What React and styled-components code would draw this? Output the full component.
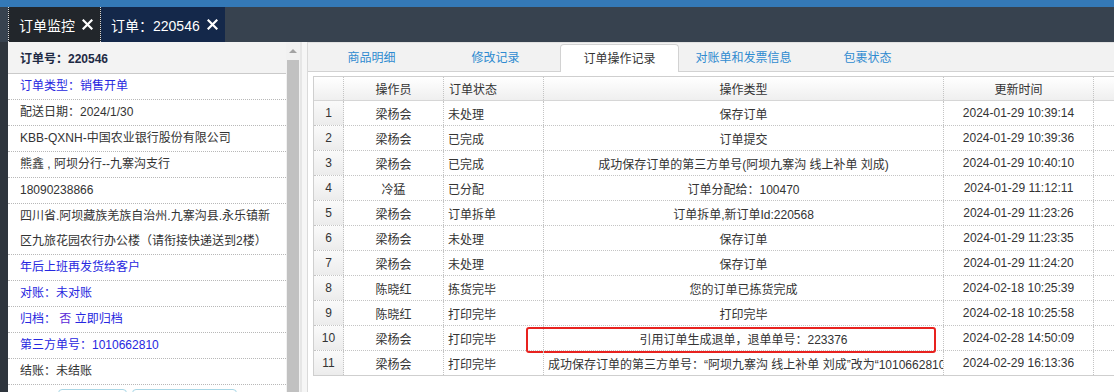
import React from 'react';
import styled, { createGlobalStyle } from 'styled-components';

const Global = createGlobalStyle`
  html, body { margin: 0; padding: 0; }
  body {
    font-family: "Liberation Sans", "Noto Sans CJK SC", sans-serif;
    font-size: 12px;
    color: #333;
    background: #364250;
  }
  * { box-sizing: border-box; }
`;

const Page = styled.div`
  width: 1114px;
  height: 392px;
  overflow: hidden;
  display: flex;
  flex-direction: column;
  background: #364250;
`;

const TopStrip = styled.div`
  flex: none;
  height: 7px;
  background: #3479b7;
`;

const TabBar = styled.div`
  flex: none;
  height: 35px;
  display: flex;
  padding-left: 8px;
  background: #37424f;
`;

const PageTab = styled.div`
  display: flex;
  align-items: center;
  gap: 7px;
  padding: 0 7px 0 10px;
  color: #fff;
  font-size: 14px;
  background: ${p => (p.$active ? '#14284a' : '#22262b')};
  border-left: ${p => (p.$active ? 'none' : '1px dotted #d8d8d8')};
  border-right: ${p => (p.$active ? 'none' : '1px dotted #d8d8d8')};
`;

const CloseIcon = () => (
  <svg width="11" height="11" viewBox="0 0 11 11">
    <path d="M1.5 1.5 L9.5 9.5 M9.5 1.5 L1.5 9.5" stroke="#fff" strokeWidth="2.2" strokeLinecap="square" />
  </svg>
);

const Body = styled.div`
  flex: 1;
  min-height: 0;
  display: flex;
  padding-left: 8px;
  background: #2e353d;
`;

const LeftPanel = styled.div`
  flex: none;
  width: 278px;
  background: #fff;
  display: flex;
  flex-direction: column;
`;

const InfoHeader = styled.div`
  flex: none;
  height: 32px;
  display: flex;
  align-items: center;
  padding-left: 12px;
  background: #f3f3f3;
  border-bottom: 1px solid #cacaca;
  font-weight: bold;
  color: #1e2a44;
`;

const InfoRow = styled.div`
  flex: none;
  padding: 0 6px 0 12px;
  line-height: 25px;
  border-bottom: 1px dotted #b8b8b8;
  color: ${p => (p.$blue ? '#2727e0' : '#333')};
  white-space: nowrap;
`;

const Accent = styled.span`
  color: #5a2ad8;
`;

const ButtonRow = styled.div`
  display: flex;
  justify-content: center;
  gap: 5px;
  padding-top: 4px;
`;

const SmallButton = styled.button`
  width: ${p => p.$w}px;
  height: 26px;
  background: #fff;
  border: 1px solid #a9d7e6;
  border-radius: 4px;
  font: inherit;
  color: #333;
`;

const Scrollbar = styled.div`
  flex: none;
  width: 14px;
  background: #f1f1f1;
  display: flex;
  flex-direction: column;
`;

const ScrollArrow = styled.div`
  flex: none;
  height: 18px;
  display: flex;
  align-items: center;
  justify-content: center;
  &::before {
    content: '';
    border-left: 4px solid transparent;
    border-right: 4px solid transparent;
    border-bottom: 4px solid #a3a3a3;
  }
`;

const ScrollThumb = styled.div`
  flex: 1;
  margin: 0 1px;
  background: #c1c1c1;
`;

const Splitter = styled.div`
  flex: none;
  width: 8px;
  background: #f6f6f6;
  border-left: 2px solid #e6e6e6;
  border-right: 1px solid #dadada;
`;

const RightPanel = styled.div`
  flex: 1;
  min-width: 0;
  background: #fff;
  display: flex;
  flex-direction: column;
`;

const SubTabBar = styled.div`
  flex: none;
  height: 30px;
  display: flex;
  align-items: flex-end;
  gap: 5px;
  padding-left: 4px;
  background: #f2f2f2;
  border-top: 1px solid #e2e2e2;
  border-bottom: 1px solid #d2d2d2;
`;

const SubTab = styled.div`
  flex: none;
  width: 119px;
  height: ${p => (p.$active ? '28px' : '27px')};
  margin-bottom: ${p => (p.$active ? '-1px' : '0')};
  display: flex;
  align-items: center;
  justify-content: center;
  padding-bottom: 2px;
  color: ${p => (p.$active ? '#333' : '#2f8bd0')};
  background: ${p => (p.$active ? '#fff' : 'transparent')};
  border: ${p => (p.$active ? '1px solid #d2d2d2' : 'none')};
  border-bottom: none;
  border-radius: 4px 4px 0 0;
`;

const TableWrap = styled.div`
  padding: 4px 0 0 5px;
`;

const Table = styled.div`
  width: 1000px;
  border: 1px solid #cfcfcf;
  display: flex;
  flex-direction: column;
`;

const cols = '30px 100px 100px 400px 150px 1fr';

const HeadRow = styled.div`
  display: grid;
  grid-template-columns: ${cols};
  height: 24px;
  background: linear-gradient(#ffffff, #efefef);
  border-bottom: 1px solid #d6d6d6;
`;

const HeadCell = styled.div`
  display: flex;
  align-items: center;
  justify-content: ${p => (p.$align === 'left' ? 'flex-start' : 'center')};
  padding-left: ${p => (p.$align === 'left' ? '5px' : '0')};
  border-right: ${p => (p.$fill ? 'none' : '1px dotted #c4c4c4')};
`;

const Row = styled.div`
  position: relative;
  display: grid;
  grid-template-columns: ${cols};
  height: 25px;
  border-bottom: 1px dotted #c4c4c4;
  &:last-child { border-bottom: none; height: 24px; }
`;

const Cell = styled.div`
  display: flex;
  align-items: center;
  justify-content: ${p => (p.$align === 'left' ? 'flex-start' : 'center')};
  padding-left: ${p => (p.$align === 'left' ? '4px' : '0')};
  overflow: hidden;
  white-space: nowrap;
  border-right: ${p => (p.$fill ? 'none' : '1px dotted #c4c4c4')};
  background: ${p => (p.$num ? 'linear-gradient(#fafafa, #ececec)' : 'transparent')};
`;

const Highlight = styled.div`
  position: absolute;
  left: 212px;
  top: 1px;
  width: 410px;
  height: 26px;
  border: 2px solid #e8221f;
  border-radius: 3px;
  pointer-events: none;
`;

const rows = [
  ['梁杨会', '未处理', '保存订单', '2024-01-29 10:39:14'],
  ['梁杨会', '已完成', '订单提交', '2024-01-29 10:39:36'],
  ['梁杨会', '已完成', '成功保存订单的第三方单号(阿坝九寨沟 线上补单 刘成)', '2024-01-29 10:40:10'],
  ['冷猛', '已分配', '订单分配给：100470', '2024-01-29 11:12:11'],
  ['梁杨会', '订单拆单', '订单拆单,新订单Id:220568', '2024-01-29 11:23:26'],
  ['梁杨会', '未处理', '保存订单', '2024-01-29 11:23:35'],
  ['梁杨会', '未处理', '保存订单', '2024-01-29 11:24:20'],
  ['陈晓红', '拣货完毕', '您的订单已拣货完成', '2024-02-18 10:25:39'],
  ['陈晓红', '打印完毕', '打印完毕', '2024-02-18 10:25:58'],
  ['梁杨会', '打印完毕', '引用订单生成退单，退单单号：223376', '2024-02-28 14:50:09', true],
  ['梁杨会', '打印完毕', '成功保存订单的第三方单号：“阿坝九寨沟 线上补单 刘成”改为“1010662810”', '2024-02-29 16:13:36', false, true],
];

const subTabs = ['商品明细', '修改记录', '订单操作记录', '对账单和发票信息', '包裹状态'];

export default function App() {
  return (
    <>
      <Global />
      <Page>
        <TopStrip />
        <TabBar>
          <PageTab>订单监控<CloseIcon /></PageTab>
          <PageTab $active>订单：220546<CloseIcon /></PageTab>
        </TabBar>
        <Body>
          <LeftPanel>
            <InfoHeader>订单号：220546</InfoHeader>
            <InfoRow $blue>订单类型：销售开单</InfoRow>
            <InfoRow>配送日期：2024/1/30</InfoRow>
            <InfoRow>KBB-QXNH-中国农业银行股份有限公司</InfoRow>
            <InfoRow>熊鑫 , 阿坝分行--九寨沟支行</InfoRow>
            <InfoRow>18090238866</InfoRow>
            <InfoRow>四川省.阿坝藏族羌族自治州.九寨沟县.永乐镇新<br />区九旅花园农行办公楼（请衔接快递送到2楼）</InfoRow>
            <InfoRow $blue>年后上班再发货给客户</InfoRow>
            <InfoRow $blue>对账：未对账</InfoRow>
            <InfoRow $blue>归档： <Accent>否</Accent> 立即归档</InfoRow>
            <InfoRow $blue>第三方单号：1010662810</InfoRow>
            <InfoRow>结账：未结账</InfoRow>
            <ButtonRow>
              <SmallButton $w={69}>确认结账</SmallButton>
              <SmallButton $w={105}>打印配送单</SmallButton>
            </ButtonRow>
          </LeftPanel>
          <Scrollbar>
            <ScrollArrow />
            <ScrollThumb />
          </Scrollbar>
          <Splitter />
          <RightPanel>
            <SubTabBar>
              {subTabs.map((t, i) => (
                <SubTab key={t} $active={i === 2}>{t}</SubTab>
              ))}
            </SubTabBar>
            <TableWrap>
              <Table>
                <HeadRow>
                  <HeadCell />
                  <HeadCell>操作员</HeadCell>
                  <HeadCell $align="left">订单状态</HeadCell>
                  <HeadCell>操作类型</HeadCell>
                  <HeadCell>更新时间</HeadCell>
                  <HeadCell $fill />
                </HeadRow>
                {rows.map((r, i) => (
                  <Row key={i}>
                    <Cell $num>{i + 1}</Cell>
                    <Cell>{r[0]}</Cell>
                    <Cell $align="left">{r[1]}</Cell>
                    <Cell $align={r[5] ? 'left' : 'center'}>{r[2]}</Cell>
                    <Cell>{r[3]}</Cell>
                    <Cell $fill />
                    {r[4] && <Highlight />}
                  </Row>
                ))}
              </Table>
            </TableWrap>
          </RightPanel>
        </Body>
      </Page>
    </>
  );
}
